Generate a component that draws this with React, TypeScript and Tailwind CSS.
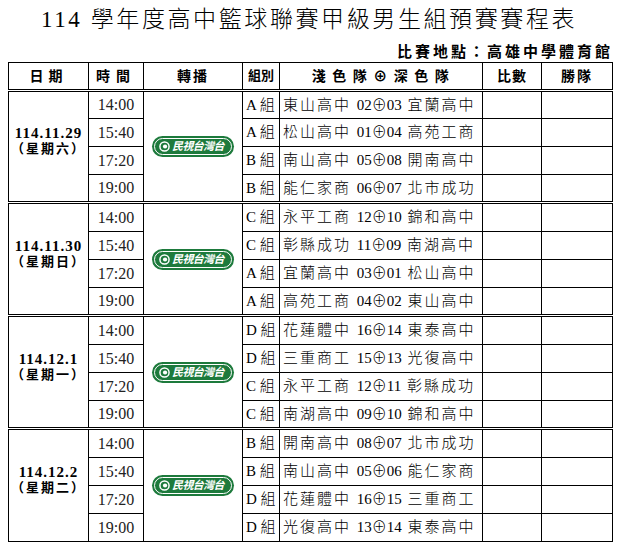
import React from 'react';

type Game = { time: string; group: string; home: string; hs: string; as: string; away: string };
type Day = { date: string; week: string; games: Game[] };

const days: Day[] = [
  {
    date: '114.11.29',
    week: '（星期六）',
    games: [
      { time: '14:00', group: 'A', home: '東山高中', hs: '02', as: '03', away: '宜蘭高中' },
      { time: '15:40', group: 'A', home: '松山高中', hs: '01', as: '04', away: '高苑工商' },
      { time: '17:20', group: 'B', home: '南山高中', hs: '05', as: '08', away: '開南高中' },
      { time: '19:00', group: 'B', home: '能仁家商', hs: '06', as: '07', away: '北市成功' },
    ],
  },
  {
    date: '114.11.30',
    week: '（星期日）',
    games: [
      { time: '14:00', group: 'C', home: '永平工商', hs: '12', as: '10', away: '錦和高中' },
      { time: '15:40', group: 'C', home: '彰縣成功', hs: '11', as: '09', away: '南湖高中' },
      { time: '17:20', group: 'A', home: '宜蘭高中', hs: '03', as: '01', away: '松山高中' },
      { time: '19:00', group: 'A', home: '高苑工商', hs: '04', as: '02', away: '東山高中' },
    ],
  },
  {
    date: '114.12.1',
    week: '（星期一）',
    games: [
      { time: '14:00', group: 'D', home: '花蓮體中', hs: '16', as: '14', away: '東泰高中' },
      { time: '15:40', group: 'D', home: '三重商工', hs: '15', as: '13', away: '光復高中' },
      { time: '17:20', group: 'C', home: '永平工商', hs: '12', as: '11', away: '彰縣成功' },
      { time: '19:00', group: 'C', home: '南湖高中', hs: '09', as: '10', away: '錦和高中' },
    ],
  },
  {
    date: '114.12.2',
    week: '（星期二）',
    games: [
      { time: '14:00', group: 'B', home: '開南高中', hs: '08', as: '07', away: '北市成功' },
      { time: '15:40', group: 'B', home: '南山高中', hs: '05', as: '06', away: '能仁家商' },
      { time: '17:20', group: 'D', home: '花蓮體中', hs: '16', as: '15', away: '三重商工' },
      { time: '19:00', group: 'D', home: '光復高中', hs: '13', as: '14', away: '東泰高中' },
    ],
  },
];

const font = { fontFamily: '"Liberation Serif", "Noto Sans CJK TC", serif' };

function FtvLogo() {
  return (
    <div className="mx-auto flex h-[21px] w-[82px] items-center rounded-full bg-[#1d7a3c] p-[2px]">
      <div className="flex h-full w-full items-center gap-[2px] overflow-hidden rounded-full border border-white pl-[4px]">
        <svg width="11" height="11" viewBox="0 0 12 12" className="shrink-0">
          <circle cx="6" cy="6" r="5" fill="none" stroke="white" strokeWidth="1.6" />
          <circle cx="6.6" cy="6" r="2.3" fill="white" />
        </svg>
        <span className="whitespace-nowrap text-[11px] font-bold italic leading-none tracking-[-0.6px] text-white">
          民視台灣台
        </span>
      </div>
    </div>
  );
}

export default function App() {
  const cell = 'border border-black p-0';
  return (
    <div className="h-[547px] w-[618px] overflow-hidden bg-white text-black" style={font}>
      <div className="h-[42px] pt-[5px] text-center text-[23px] font-light leading-[30px] tracking-[2.6px]">
        114 學年度高中籃球聯賽甲級男生組預賽賽程表
      </div>
      <div className="flex h-[20px] justify-end pr-[5px] text-[15px] font-bold leading-[20px] tracking-[3px]">
        比賽地點：高雄中學體育館
      </div>
      <table className="ml-[8px] w-[604px] table-fixed border-collapse border border-black">
        <colgroup>
          <col className="w-[80px]" />
          <col className="w-[55px]" />
          <col className="w-[99px]" />
          <col className="w-[37px]" />
          <col className="w-[203px]" />
          <col className="w-[59px]" />
          <col className="w-[71px]" />
        </colgroup>
        <thead>
          <tr className="h-[28px] text-center text-[14px] font-bold">
            <th className={`${cell} tracking-[5px]`}>日期</th>
            <th className={`${cell} tracking-[6px]`}>時間</th>
            <th className={`${cell} tracking-[2px]`}>轉播</th>
            <th className={`${cell} text-[13px]`}>組別</th>
            <th className={`${cell} tracking-[1.5px]`}>淺 色 隊 ⊕ 深 色 隊</th>
            <th className={`${cell} tracking-[1px]`}>比數</th>
            <th className={`${cell} tracking-[2px]`}>勝隊</th>
          </tr>
        </thead>
        <tbody>
          {days.map((d, di) =>
            d.games.map((g, i) => {
              const top = i === 0 ? 'border-t-[3px] border-double' : '';
              const h = i === 0 && di > 0 ? 'h-[29px]' : 'h-[28px]';
              return (
                <tr key={d.date + g.time} className={h}>
                  {i === 0 && (
                    <td rowSpan={4} className={`${cell} ${top} text-center`}>
                      <div className="pb-[10px]">
                        <div className="text-[15px] font-bold leading-[15px] tracking-[1px]">{d.date}</div>
                        <div className="text-[13px] font-bold leading-[16px] tracking-[2px]">{d.week}</div>
                      </div>
                    </td>
                  )}
                  <td className={`${cell} ${top} text-center text-[16px] text-[#222]`}>{g.time}</td>
                  {i === 0 && (
                    <td rowSpan={4} className={`${cell} ${top}`}>
                      <FtvLogo />
                    </td>
                  )}
                  <td className={`${cell} ${top} whitespace-nowrap pl-[3px] text-[15px] font-light`}>
                    {g.group} 組
                  </td>
                  <td className={`${cell} ${top} whitespace-nowrap pl-[3px] text-[15px] font-light tracking-[2px]`}>
                    {g.home} <span className="tracking-normal">{g.hs}⊕{g.as}</span> {g.away}
                  </td>
                  <td className={`${cell} ${top}`}></td>
                  <td className={`${cell} ${top}`}></td>
                </tr>
              );
            })
          )}
        </tbody>
      </table>
    </div>
  );
}
